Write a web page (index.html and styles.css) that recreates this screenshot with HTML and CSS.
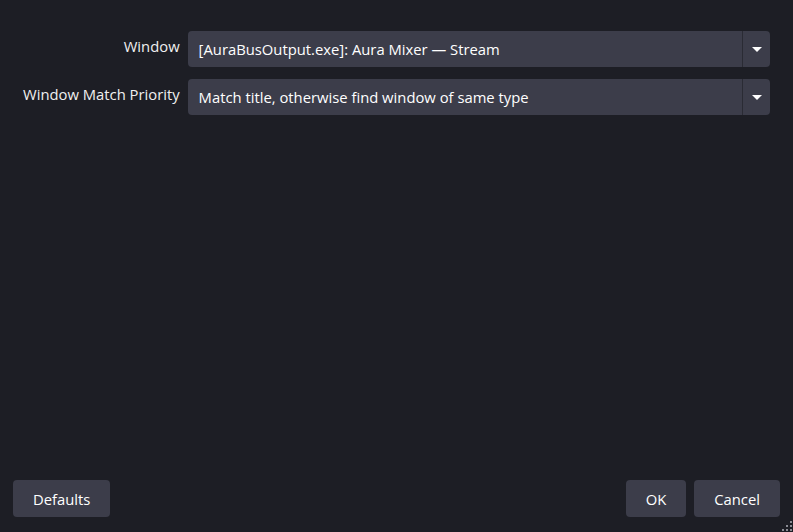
FILE: index.html
```html
<!DOCTYPE html>
<html>
<head>
    <title>Window Capture Properties</title>
    <link rel="stylesheet" href="styles.css">
</head>
<body>
    <div class="dialog">
        <div class="properties">
            <label class="prop-label">Window</label>
            <div class="combo">
                <span class="combo-text">[AuraBusOutput.exe]: Aura Mixer — Stream</span>
                <span class="combo-arrow"><span class="arrow"></span></span>
            </div>

            <label class="prop-label">Window Match Priority</label>
            <div class="combo">
                <span class="combo-text">Match title, otherwise find window of same type</span>
                <span class="combo-arrow"><span class="arrow"></span></span>
            </div>
        </div>

        <div class="button-row">
            <button class="dialog-button">Defaults</button>
            <div class="spacer"></div>
            <button class="dialog-button">OK</button>
            <button class="dialog-button">Cancel</button>
        </div>

        <div class="size-grip">
            <span></span><span></span><span></span>
            <span></span><span></span><span></span>
        </div>
    </div>
</body>
</html>
```

FILE: styles.css
```css
html, body {
    margin: 0;
    height: 100%;
}

body {
    font-family: 'Open Sans', 'Noto Sans', sans-serif;
    font-size: 14.8px;
    background-color: #1d1e25;
    color: #ffffff;
}

.dialog {
    position: relative;
    height: 100%;
    display: flex;
    flex-direction: column;
    box-sizing: border-box;
    padding: 31px 13px 15px 13px;
}

.properties {
    flex: 1;
    display: grid;
    grid-template-columns: max-content 1fr;
    column-gap: 8px;
    row-gap: 12px;
    align-content: start;
    padding: 0 10px;
}

.prop-label {
    text-align: right;
    padding-top: 5px;
    color: #f0f0f0;
}

.combo {
    display: flex;
    height: 36px;
    background-color: #3c3d4a;
    border-radius: 4px;
}

.combo-text {
    flex: 1;
    padding: 0 11px;
    line-height: 36px;
    white-space: nowrap;
    overflow: hidden;
}

.combo-arrow {
    width: 27px;
    border-left: 1px solid #2a2b34;
    display: flex;
    align-items: center;
    justify-content: center;
}

.arrow {
    width: 0;
    height: 0;
    border-left: 5px solid transparent;
    border-right: 5px solid transparent;
    border-top: 5px solid #ffffff;
}

.button-row {
    display: flex;
    gap: 8px;
}

.spacer {
    flex: 1;
}

.dialog-button {
    font-family: inherit;
    font-size: 14.8px;
    color: #ffffff;
    background-color: #3c3d4a;
    border: none;
    border-radius: 4px;
    height: 37px;
    padding: 0 20px;
}

.size-grip {
    position: absolute;
    right: 1px;
    bottom: 1px;
    width: 10px;
    height: 10px;
    display: grid;
    grid-template-columns: repeat(3, 2px);
    grid-template-rows: repeat(3, 2px);
    gap: 2px;
}

.size-grip span {
    background-color: #8a8b93;
}

.size-grip span:nth-child(1) { grid-column: 3; grid-row: 1; }
.size-grip span:nth-child(2) { grid-column: 2; grid-row: 2; }
.size-grip span:nth-child(3) { grid-column: 3; grid-row: 2; }
.size-grip span:nth-child(4) { grid-column: 1; grid-row: 3; }
.size-grip span:nth-child(5) { grid-column: 2; grid-row: 3; }
.size-grip span:nth-child(6) { grid-column: 3; grid-row: 3; }
```
